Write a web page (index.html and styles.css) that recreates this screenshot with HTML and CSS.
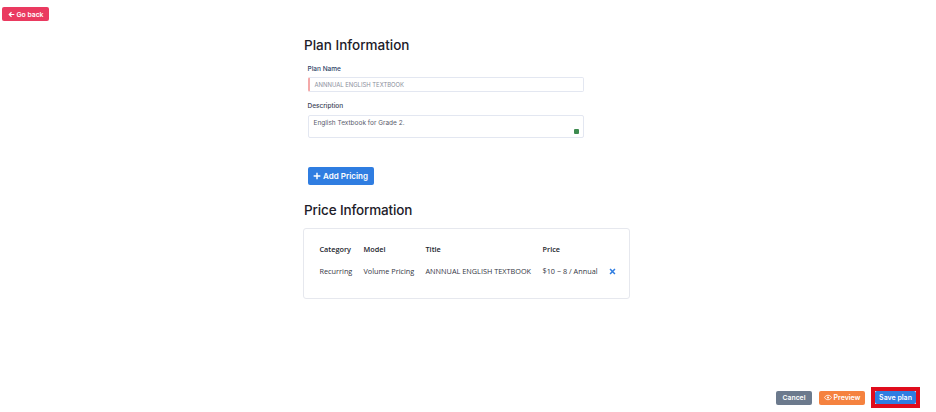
FILE: index.html
```html
<!DOCTYPE html>
<html lang="en">
<head>
<meta charset="utf-8">
<title>Plan Information</title>
<link rel="stylesheet" href="styles.css">
</head>
<body>
<div class="page">
  <div class="topbar">
    <button class="btn btn-back"><svg class="ico" viewBox="0 0 10 10"><path d="M9 5H2M5 1.800 1.800 5 5 8.200" fill="none" stroke="currentColor" stroke-width="1.700"/></svg>Go back</button>
  </div>
  <main class="content">
    <h2 class="heading">Plan Information</h2>
    <div class="form">
      <label class="label label-blue">Plan Name</label>
      <div class="field field-name">ANNNUAL ENGLISH TEXTBOOK</div>
      <label class="label label-desc">Description</label>
      <div class="field field-desc">English Textbook for Grade 2.<span class="grammarly"></span></div>
      <button class="btn btn-add"><svg class="ico-plus" viewBox="0 0 10 10"><path d="M5 .8v8.400M.8 5h8.400" fill="none" stroke="currentColor" stroke-width="1.800"/></svg>Add Pricing</button>
    </div>
    <h2 class="heading heading-price">Price Information</h2>
    <section class="card">
      <table class="table">
        <thead>
          <tr><th class="c1">Category</th><th class="c2">Model</th><th class="c3">Title</th><th class="c4">Price</th><th></th></tr>
        </thead>
        <tbody>
          <tr>
            <td>Recurring</td><td>Volume Pricing</td><td>ANNNUAL ENGLISH TEXTBOOK</td><td>$10 ~ 8 / Annual</td>
            <td class="c5"><svg class="ico-x" viewBox="0 0 10 10"><path d="M1.500 1.500l7 7M8.500 1.500l-7 7" fill="none" stroke="currentColor" stroke-width="2.200"/></svg></td>
          </tr>
        </tbody>
      </table>
    </section>
  </main>
  <footer class="footer">
    <button class="btn btn-cancel">Cancel</button>
    <button class="btn btn-preview"><svg class="ico-eye" viewBox="0 0 12 10"><path d="M.8 5C2 2.800 3.800 1.700 6 1.700S10 2.800 11.200 5C10 7.200 8.200 8.300 6 8.300S2 7.200.8 5Z" fill="none" stroke="currentColor" stroke-width="1.200"/><circle cx="6" cy="5" r="1.500" fill="currentColor"/></svg>Preview</button>
    <span class="highlight"><button class="btn btn-save">Save plan</button></span>
  </footer>
</div>
</body>
</html>
```
FILE: styles.css
```css
* { box-sizing: border-box; }
html, body { margin: 0; padding: 0; background: #fff; }
body { font-family: "Inter", "Liberation Sans", sans-serif; color: #1f2430; }
.page { width: 936px; height: 412px; display: flex; flex-direction: column; overflow: hidden; }
.topbar { padding: 7px 0 0 2px; height: 37px; flex: none; display: flex; align-items: flex-start; }
.btn { border: 0; border-radius: 2px; color: #fff; font-family: inherit; font-weight: 600; display: inline-flex; align-items: center; justify-content: center; padding: 0; }
.btn-back { width: 47px; height: 14px; background: #ea3a60; font-size: 6.800px; gap: 2px; }
.ico { width: 7px; height: 7px; }
.content { margin-left: 304px; width: 326px; flex: none; }
.heading { margin: 0; font-size: 13.500px; line-height: 16px; font-weight: 500; color: #1d2029; height: 16px; }
.form { padding-left: 3.500px; width: 280px; }
.label { display: block; font-size: 6.500px; line-height: 8px; font-weight: 500; color: #3a4256; }
.label-blue { margin-top: 12px; color: #2d3f66; }
.label-desc { margin-top: 10px; }
.field { width: 276px; background: #fff; border: 1px solid #e3e7f1; border-radius: 2px; font-size: 5.900px; color: #8b8f9c; }
.field-name { height: 15px; margin-top: 4px; line-height: 13px; padding-left: 5px; border-left: 2px solid #f4a9a9; }
.field-desc { height: 23px; margin-top: 5px; line-height: 10px; font-size: 6.500px; padding: 2px 0 0 5px; color: #5a5c6c; position: relative; }
.grammarly { position: absolute; right: 4px; bottom: 3px; width: 5px; height: 5px; background: #3d8b4f; border-radius: 1px; }
.btn-add { width: 66px; height: 18px; margin-top: 29px; background: #2f7de1; font-size: 8px; gap: 2px; display: flex; }
.ico-plus { width: 8px; height: 8px; }
.heading-price { margin-top: 17px; letter-spacing: -.15px; }
.card { margin-top: 10px; margin-left: -1px; width: 327px; height: 71px; border: 1px solid #e6e8ee; border-radius: 3px; padding: 14px 0 0 15.500px; }
.table { border-collapse: collapse; font-family: "Open Sans", "Liberation Sans", sans-serif; font-size: 7.300px; color: #33363f; table-layout: fixed; width: 305px; }
.table th { font-weight: 600; text-align: left; padding: 0; height: 12px; line-height: 12px; color: #22252d; }
.table td { padding: 0; height: 32px; line-height: 12px; white-space: nowrap; }
.c1 { width: 44px; }
.c2 { width: 62px; }
.c3 { width: 117px; }
.c4 { width: 66px; }
.c5 { color: #2f7de1; }
.ico-x { width: 7px; height: 7px; display: block; }
.footer { margin-top: auto; padding: 0 16px 4px 0; display: flex; justify-content: flex-end; align-items: center; gap: 7px; }
.btn-cancel { width: 36px; height: 14px; background: #6c7a8d; font-size: 6.800px; }
.btn-preview { width: 46px; height: 14px; background: #f5823f; font-size: 7px; gap: 2px; }
.ico-eye { width: 8px; height: 7px; }
.highlight { display: flex; width: 49px; height: 21px; border: 4px solid #e00c1c; margin-left: -1px; }
.btn-save { flex: 1; background: #2f7de1; font-size: 7px; }
```
